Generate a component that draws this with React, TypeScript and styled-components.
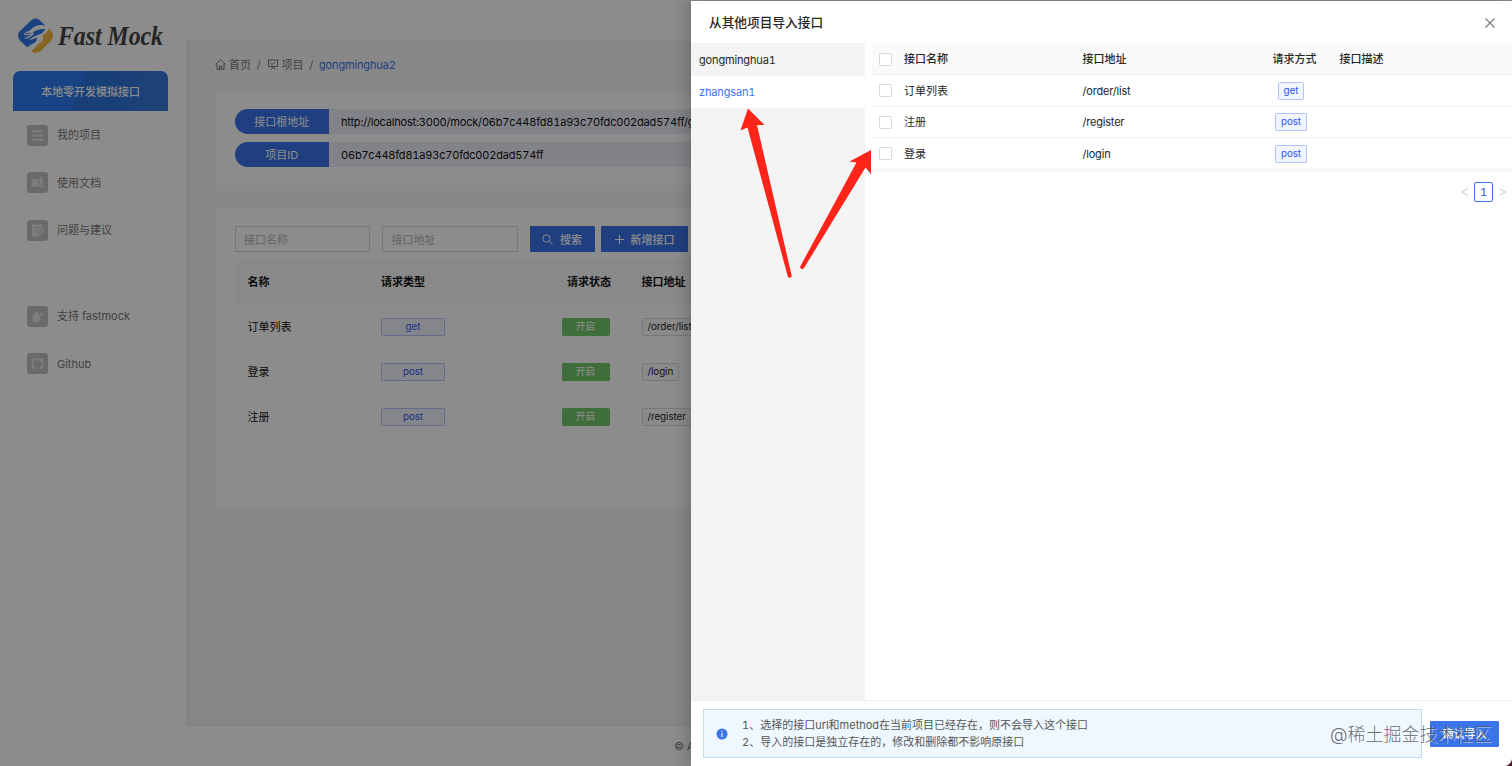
import React from 'react';
import styled, { createGlobalStyle } from 'styled-components';

const GlobalStyle = createGlobalStyle`
  * { box-sizing: border-box; }
  body {
    margin: 0;
    overflow: hidden;
    background: #fff;
    color: #262626;
    font-family: Inter, "Noto Sans CJK SC", sans-serif;
    font-size: 11px;
    line-height: 16px;
    font-variant-numeric: tabular-nums;
  }
`;

const Page = styled.div`
  position: relative;
  display: flex;
  width: 1512px;
  height: 766px;
  overflow: hidden;
`;

/* ---------- sidebar ---------- */
const Sidebar = styled.aside`
  width: 186px;
  flex: none;
  display: flex;
  flex-direction: column;
  padding: 16px 18px 0 13px;
`;

const Logo = styled.div`
  display: flex;
  align-items: center;
  height: 40px;
  padding-left: 4px;
  margin-bottom: 15px;
`;

const LogoText = styled.svg`
  width: 114px;
  height: 38px;
  flex: none;
  overflow: visible;
  font-family: "Liberation Serif", serif;
  font-size: 27px;
  font-weight: 700;
  font-style: italic;
`;

const Banner = styled.div`
  height: 40px;
  border-radius: 7px 7px 0 0;
  background: linear-gradient(112deg, #2d7bf0 0 43%, #2f73da 43% 60%, #3b7cd8);
  color: #fff;
  display: flex;
  align-items: center;
  justify-content: center;
  font-weight: 500;
  padding-top: 1px;
`;

const Nav = styled.nav`
  display: flex;
  flex-direction: column;
`;

const NavItem = styled.div<{ $gap?: number }>`
  display: flex;
  align-items: center;
  gap: 9px;
  height: 47.5px;
  padding: 1px 0 0 14px;
  color: #777;
  margin-top: ${(p) => p.$gap ?? 0}px;
`;

const NavIcon = styled.span`
  width: 21px;
  height: 21px;
  border-radius: 3px;
  background: #c2c2c2;
  display: grid;
  place-items: center;
`;

/* ---------- main column ---------- */
const Main = styled.main`
  flex: 1;
  display: flex;
  flex-direction: column;
`;

const TopBar = styled.header`
  height: 40px;
`;

const Content = styled.section`
  flex: 1;
  background: #f8f8f8;
  box-shadow: inset 3px -3px 8px rgba(0, 0, 0, 0.05);
  padding: 16px 30px 0;
`;

const Breadcrumb = styled.div`
  display: flex;
  align-items: center;
  height: 17px;
  color: #777;
  margin-bottom: 19px;
  margin-left: -1px;
`;

const Crumb = styled.span<{ $active?: boolean }>`
  display: flex;
  align-items: center;
  gap: 3px;
  letter-spacing: ${(p) => (p.$active ? '-0.15px' : '0')};
  color: ${(p) => (p.$active ? '#3a74ea' : 'inherit')};
`;

const Slash = styled.span`
  width: 15.5px;
  text-align: center;
`;

const Card = styled.div<{ $height: number; $pad: string }>`
  background: #fff;
  height: ${(p) => p.$height}px;
  padding: ${(p) => p.$pad};
  & + & { margin-top: 23px; }
`;

const InfoRow = styled.div`
  display: flex;
  height: 25px;
  margin-bottom: 8px;
`;

const InfoLabel = styled.div`
  width: 94.5px;
  border-radius: 13px 0 0 13px;
  background: #3a74ea;
  color: #fff;
  display: grid;
  place-items: center;
`;

const InfoValue = styled.div`
  flex: 1;
  background: #edeffa;
  padding-left: 12px;
  line-height: 26px;
  letter-spacing: -0.19px;
  color: #111;
`;

const Toolbar = styled.div`
  display: flex;
  height: 26px;
`;

const Field = styled.div`
  width: 135.5px;
  margin-right: 12px;
  border: 1px solid #d9d9d9;
  padding: 0 8.5px;
  line-height: 26px;
  color: #b4b4b4;
`;

const Button = styled.button<{ $width: number }>`
  width: ${(p) => p.$width}px;
  height: 26px;
  padding: 1px 0 0;
  margin-right: 6.5px;
  border: 0;
  border-radius: 1px;
  background: #3a74ea;
  color: #fff;
  font: inherit;
  font-weight: 500;
  display: flex;
  align-items: center;
  justify-content: center;
  gap: 7px;
`;

const ApiGrid = styled.div<{ $head?: boolean }>`
  display: grid;
  grid-template-columns: 146.5px 176px 84.5px 1fr;
  align-items: center;
  height: ${(p) => (p.$head ? 44 : 45)}px;
  margin-top: ${(p) => (p.$head ? 8 : 0)}px;
  padding-top: ${(p) => (p.$head ? 1 : 2)}px;
  background: ${(p) => (p.$head ? '#fafafa' : 'transparent')};
  font-weight: ${(p) => (p.$head ? 600 : 400)};
  border-bottom: 1px solid ${(p) => (p.$head ? '#fafafa' : '#fbfbfb')};
  color: #111;
`;

const Cell = styled.div<{ $left?: number }>`
  padding-left: ${(p) => p.$left ?? 0}px;
`;

const Tag = styled.span<{ $kind?: 'method' | 'on' | 'path'; $width?: number }>`
  display: inline-block;
  vertical-align: middle;
  width: ${(p) => (p.$width ? `${p.$width}px` : 'auto')};
  height: 18px;
  padding: 0 5px;
  line-height: 16px;
  font-size: 9.8px;
  letter-spacing: -0.05px;
  font-weight: 400;
  text-align: center;
  border-radius: 1.5px;
  border: 1px solid;
  ${(p) =>
    p.$kind === 'on'
      ? 'color:#fff;background:#75c96b;border-color:#75c96b;'
      : p.$kind === 'path'
        ? 'color:#222;background:#fcfcfc;border-color:#d9d9d9;'
        : 'color:#2f54eb;background:#f0f5ff;border-color:#b4c4fb;'}
`;

const PageFooter = styled.footer`
  height: 40px;
  padding-left: 488px;
  line-height: 41px;
  color: #777;
`;

const Mask = styled.div`
  position: absolute;
  inset: 0;
  background: rgba(0, 0, 0, 0.45);
`;

/* ---------- drawer ---------- */
const Drawer = styled.section`
  position: absolute;
  top: 1px;
  right: 0;
  bottom: 0;
  width: 821px;
  background: #fff;
  box-shadow: -4px 0 14px rgba(0, 0, 0, 0.2);
  display: flex;
  flex-direction: column;
`;

const DrawerHeader = styled.div`
  height: 42px;
  padding: 2px 17px 0 18px;
  display: flex;
  align-items: center;
  justify-content: space-between;
  font-size: 12.7px;
  font-weight: 500;
`;

const DrawerBody = styled.div`
  flex: 1;
  display: flex;
  gap: 7px;
`;

const ProjectList = styled.div`
  width: 174px;
  background: #f4f4f4;
`;

const Project = styled.div<{ $active?: boolean }>`
  height: ${(p) => (p.$active ? 32 : 33)}px;
  line-height: ${(p) => (p.$active ? 32 : 34)}px;
  padding-left: 8px;
  letter-spacing: -0.15px;
  background: ${(p) => (p.$active ? '#fff' : 'transparent')};
  color: ${(p) => (p.$active ? '#3a78f2' : '#262626')};
`;

const ImportPane = styled.div`
  flex: 1;
`;

const ImportTable = styled.div`
  border-bottom: 1px solid #f3f3f3;
  padding-bottom: 1px;
`;

const ImportRow = styled.div<{ $head?: boolean }>`
  display: grid;
  grid-template-columns: 32px 178.5px 178px 79px 1fr;
  align-items: center;
  height: ${(p) => (p.$head ? 32 : 31.6)}px;
  padding-top: 1px;
  border-bottom: 1px solid #efefef;
  background: ${(p) => (p.$head ? '#fafafa' : '#fff')};
  font-weight: ${(p) => (p.$head ? 500 : 400)};
`;

const PathText = styled.div`
  letter-spacing: -0.2px;
`;

const Check = styled.span`
  display: block;
  width: 13px;
  height: 13px;
  margin-left: 6.5px;
  border: 1px solid #d9d9d9;
  border-radius: 1.5px;
  background: #fff;
`;

const MethodCell = styled.div<{ $shift?: number }>`
  text-align: center;
  padding-right: ${(p) => p.$shift ?? 12}px;
`;

const Pager = styled.div`
  display: flex;
  justify-content: flex-end;
  align-items: center;
  gap: 6px;
  padding: 10px 6px 0 0;
`;

const PageNumber = styled.span`
  width: 19px;
  height: 20px;
  border: 1px solid #3a74ea;
  border-radius: 2px;
  color: #3a74ea;
  font-weight: 500;
  line-height: 18px;
  text-align: center;
`;

const DrawerFooter = styled.div`
  height: 66px;
  border-top: 1px solid #efefef;
  padding: 8px 13px 8px 12px;
  display: flex;
  align-items: center;
  gap: 8px;
`;

const Alert = styled.div`
  width: 719px;
  height: 49px;
  border: 1px solid #c3dbf7;
  background: #f0f8ff;
  display: flex;
  align-items: center;
  gap: 14px;
  padding-left: 12px;
  line-height: 17.5px;
  color: #555;
`;

const AlertLines = styled.div`
  padding-top: 1px;
`;

const Confirm = styled(Button)`
  margin: 0;
`;

const Arrows = styled.svg`
  position: absolute;
  left: 730px;
  top: 100px;
`;

const Watermark = styled.div`
  position: absolute;
  left: 1330px;
  top: 721px;
  font-size: 18px;
  line-height: 27px;
  white-space: nowrap;
  font-weight: 300;
  color: rgba(75, 80, 90, 0.85);
  text-shadow: 1px 1px 0 rgba(255, 255, 255, 0.5);
`;

const Corner = styled.div`
  position: absolute;
  right: 0;
  bottom: 0;
  width: 8px;
  height: 8px;
  background: radial-gradient(circle at 0 0, transparent 7.5px, #4a1622 8.5px);
`;

const sideIcons: Record<string, React.ReactNode> = {
  list: <path d="M1 2.200h11M2 6.500h10M1 10.800h11" stroke="#e4e4e4" strokeWidth="2" />,
  docs: (
    <>
      <path d="M.5 3h7v7.500h-7zM8.500 1.500h2.500v7H8.500zM8 9.500h4.500v1.500H8z" fill="#e4e4e4" />
      <path d="M11.800 4v5" stroke="#e4e4e4" />
    </>
  ),
  edit: (
    <>
      <path d="M1 .5h10v5L7 12.500H1z" fill="#e4e4e4" />
      <path d="M3 3.500h6M3 6.500h3.500M6.500 11l5-7.500" stroke="#c2c2c2" />
      <path d="m8 11.500 4.500-6.500" stroke="#e4e4e4" strokeWidth="1.500" />
    </>
  ),
  drop: (
    <>
      <path d="M5.500 0C5 3 1.500 5 1.500 8.500S4 12.500 5.500 12.500s4-1 4-4S6 3 5.500 0z" fill="#e4e4e4" />
      <circle cx="10.800" cy="4" r="1.500" fill="#e4e4e4" />
    </>
  ),
  github: (
    <path
      d="M4.200 12.500H2.500C.7 10 -.2 7.500.8 5V1l2.700 1h6L12.200 1v4c1 2.500.1 5-1.700 7.500H8.800V9.800c3-1 2.500-5.300.5-6.300H3.700C1.700 4.500 1.200 8.800 4.200 9.800z"
      fill="#e4e4e4"
    />
  ),
};

const SideIcon = ({ name }: { name: string }) => (
  <NavIcon>
    <svg width="13" height="13" viewBox="0 0 13 13" fill="none">{sideIcons[name]}</svg>
  </NavIcon>
);

const nav = [
  { icon: 'list', label: '我的项目' },
  { icon: 'docs', label: '使用文档' },
  { icon: 'edit', label: '问题与建议' },
  { icon: 'drop', label: '支持 fastmock', gap: 38.5 },
  { icon: 'github', label: 'Github' },
];

const apis = [
  { name: '订单列表', method: 'get', path: '/order/list' },
  { name: '登录', method: 'post', path: '/login' },
  { name: '注册', method: 'post', path: '/register' },
];

const importable = [apis[0], apis[2], apis[1]];

export default function App() {
  return (
    <Page>
      <GlobalStyle />
      <Sidebar>
        <Logo>
          <svg width="38" height="38" viewBox="0 0 38 38">
            <path d="M15 2.500Q19-.5 23 2.500L29.500 8.500Q23 6.500 17 10Q13 14 8 15.500Q12 17 16 15.500Q22 11 29 12Q26 17 21 18Q17 19.500 12 23Q17 22.500 21 20.500Q20 26 15 27.500L10.500 30.500L2.500 23Q0 19 2 15Z" fill="#2f78ec" />
            <path d="M7 16.500Q12 19 17 16Q14 20 8 21.500" fill="none" stroke="#fff" strokeWidth="1.300" />
            <path d="M33 11L36.500 16Q38 20 35 23.500L25 34Q22 36.500 18.500 36.500L14.500 35L22 27.500Q28.500 24 26.500 18.500Q31 16 33 11Z" fill="#f4b63c" />
          </svg>
          <LogoText viewBox="0 0 114 38">
            <text x="4" y="28" textLength="105" lengthAdjust="spacingAndGlyphs" fill="#444">Fast Mock</text>
          </LogoText>
        </Logo>
        <Banner>本地零开发模拟接口</Banner>
        <Nav>
          {nav.map((n) => (
            <NavItem key={n.label} $gap={n.gap}>
              <SideIcon name={n.icon} />
              {n.label}
            </NavItem>
          ))}
        </Nav>
      </Sidebar>

      <Main>
        <TopBar />
        <Content>
          <Breadcrumb>
            <Crumb>
              <svg width="11" height="11" viewBox="0 0 11 11" fill="none" stroke="currentColor">
                <path d="M.5 5.500 5.500.8l5 4.700M2 4.500v5.800h7V4.500M4.500 10V7h2v3" />
              </svg>
              首页
            </Crumb>
            <Slash>/</Slash>
            <Crumb>
              <svg width="12" height="11" viewBox="0 0 12 11" fill="none" stroke="currentColor">
                <path d="M.5 1h11M1.500 1v6.500h9V1M6 7.500V9M3.500 10.500 6 8.500l2.500 2M3.500 4.500 5 5.500l3-2.500" />
              </svg>
              项目
            </Crumb>
            <Slash>/</Slash>
            <Crumb $active>gongminghua2</Crumb>
          </Breadcrumb>

          <Card $height={93} $pad="17px 19px 0 18.5px">
            <InfoRow>
              <InfoLabel>接口根地址</InfoLabel>
              <InfoValue>http://localhost:3000/mock/06b7c448fd81a93c70fdc002dad574ff/gongminghua2</InfoValue>
            </InfoRow>
            <InfoRow>
              <InfoLabel>项目ID</InfoLabel>
              <InfoValue>06b7c448fd81a93c70fdc002dad574ff</InfoValue>
            </InfoRow>
          </Card>

          <Card $height={301} $pad="18px 19px 0 18.5px">
            <Toolbar>
              <Field>接口名称</Field>
              <Field>接口地址</Field>
              <Button $width={65}>
                <svg width="11" height="11" viewBox="0 0 11 11" fill="none" stroke="currentColor">
                  <circle cx="4.500" cy="4.500" r="3.700" />
                  <path d="m7.200 7.200 3.300 3.300" />
                </svg>
                搜索
              </Button>
              <Button $width={87}>
                <svg width="9" height="9" viewBox="0 0 9 9" stroke="currentColor" strokeWidth="1.200">
                  <path d="M4.500 0v9M0 4.500h9" />
                </svg>
                新增接口
              </Button>
            </Toolbar>
            <ApiGrid $head>
              <Cell $left={13}>名称</Cell>
              <Cell>请求类型</Cell>
              <Cell $left={10}>请求状态</Cell>
              <Cell>接口地址</Cell>
            </ApiGrid>
            {apis.map((a) => (
              <ApiGrid key={a.name}>
                <Cell $left={13}>{a.name}</Cell>
                <Cell><Tag $width={64}>{a.method}</Tag></Cell>
                <Cell $left={4.5}><Tag $kind="on" $width={48}>开启</Tag></Cell>
                <Cell><Tag $kind="path">{a.path}</Tag></Cell>
              </ApiGrid>
            ))}
          </Card>
        </Content>
        <PageFooter>© All Rights Reserved</PageFooter>
      </Main>

      <Mask />

      <Drawer>
        <DrawerHeader>
          从其他项目导入接口
          <svg width="10" height="10" viewBox="0 0 10 10" stroke="#777" strokeWidth="1.100">
            <path d="m.5.5 9 9M9.500.5l-9 9" />
          </svg>
        </DrawerHeader>
        <DrawerBody>
          <ProjectList>
            <Project>gongminghua1</Project>
            <Project $active>zhangsan1</Project>
          </ProjectList>
          <ImportPane>
            <ImportTable>
              <ImportRow $head>
                <Check />
                <div>接口名称</div>
                <div>接口地址</div>
                <MethodCell $shift={11}>请求方式</MethodCell>
                <div>接口描述</div>
              </ImportRow>
              {importable.map((a) => (
                <ImportRow key={a.name}>
                  <Check />
                  <div>{a.name}</div>
                  <PathText>{a.path}</PathText>
                  <MethodCell $shift={18}><Tag>{a.method}</Tag></MethodCell>
                  <div />
                </ImportRow>
              ))}
            </ImportTable>
            <Pager>
              <svg width="7" height="8" viewBox="0 0 7 8" fill="none" stroke="#c4c4c4">
                <path d="M6.500.5.8 4l5.700 3.500" />
              </svg>
              <PageNumber>1</PageNumber>
              <svg width="7" height="8" viewBox="0 0 7 8" fill="none" stroke="#c4c4c4">
                <path d="M.5.5 6.200 4 .5 7.500" />
              </svg>
            </Pager>
          </ImportPane>
        </DrawerBody>
        <DrawerFooter>
          <Alert>
            <svg width="12" height="12" viewBox="0 0 12 12">
              <circle cx="6" cy="6" r="5.500" fill="#3a74ea" />
              <path d="M6 2.800v1.200M6 5v4" stroke="#fff" strokeWidth="1.100" />
            </svg>
            <AlertLines>
              <div>1、选择的接口url和method在当前项目已经存在，则不会导入这个接口</div>
              <div>2、导入的接口是独立存在的，修改和删除都不影响原接口</div>
            </AlertLines>
          </Alert>
          <Confirm $width={69}>确认导入</Confirm>
        </DrawerFooter>
      </Drawer>

      <Arrows width="150" height="180" viewBox="730 100 150 180" fill="#ff2419">
        <path d="M748 108.500 764.500 125 757 125 791.500 275 A1.800 1.800 0 0 1 787.800 276.500L747.500 127.500 740.500 130.500Z" />
        <path d="M871 150 871 174 865.500 167.500 804 268 A2 2 0 0 1 800.500 266L856.500 162.500 849.500 161.500Z" />
      </Arrows>
      <Watermark>@稀土掘金技术社区</Watermark>
      <Corner />
    </Page>
  );
}
